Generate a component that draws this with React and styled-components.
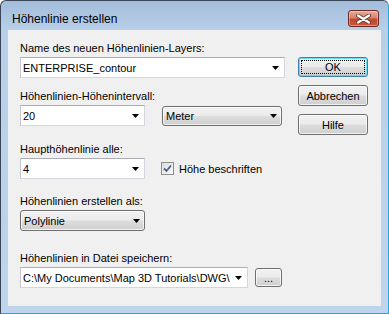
import React from "react";
import styled, { createGlobalStyle } from "styled-components";

const GlobalStyle = createGlobalStyle`
  html, body {
    margin: 0;
    padding: 0;
    background: #ffffff;
  }
  body {
    font-family: "Liberation Sans", Arial, sans-serif;
    font-size: 11px;
    color: #000;
  }
`;

const Window = styled.div`
  box-sizing: border-box;
  width: 389px;
  height: 314px;
  display: flex;
  flex-direction: column;
  border: 1px solid #3a4656;
  border-right-color: #2aa6d6;
  border-bottom-color: #2aa6d6;
  border-radius: 6px 6px 0 0;
  background: linear-gradient(#a2bcdb, #b8cfe9 28px, #bfd5ed);
  padding: 0 7px 7px 7px;
`;

const TitleBar = styled.div`
  height: 29px;
  display: flex;
  align-items: flex-start;
  justify-content: space-between;
  padding-left: 4px;
`;

const Title = styled.span`
  font-size: 12px;
  color: #000;
  padding-top: 11px;
`;

const CloseButton = styled.div`
  box-sizing: border-box;
  width: 31px;
  height: 17px;
  margin-right: 2px;
  margin-top: 9px;
  border: 1px solid #6d2a22;
  border-radius: 3px;
  background: linear-gradient(#e6ab9d, #d38570 45%, #c1482f 55%, #c8543a);
  display: flex;
  align-items: center;
  justify-content: center;
  box-shadow: inset 0 0 0 1px rgba(255, 220, 210, 0.45);
`;

const Client = styled.div`
  flex: 1;
  background: #f0f0f0;
  display: flex;
  padding: 0 14px 0 12px;
`;

const Form = styled.div`
  width: 265px;
  display: flex;
  flex-direction: column;
`;

const Group = styled.div`
  margin-top: ${(p) => p.$mt}px;
  display: flex;
  flex-direction: column;
`;

const Label = styled.div`
  height: 13px;
  line-height: 13px;
  margin-bottom: 2px;
  white-space: nowrap;
`;

const Row = styled.div`
  display: flex;
  align-items: center;
`;

const Combo = styled.div`
  box-sizing: border-box;
  width: ${(p) => p.$w}px;
  height: 21px;
  background: #fff;
  border: 1px solid #d3d6dc;
  border-top-color: #abadb3;
  border-left-color: #c6c8ce;
  display: flex;
  align-items: center;
  padding: 0 5px 0 2px;
`;

const ComboText = styled.span`
  flex: 1;
  overflow: hidden;
  white-space: nowrap;
  margin-right: 3px;
`;

const DropButton = styled.div`
  box-sizing: border-box;
  width: ${(p) => p.$w}px;
  height: ${(p) => p.$h || 21}px;
  margin-left: ${(p) => p.$ml || 0}px;
  border: 1px solid #707070;
  border-radius: 3px;
  background: linear-gradient(#f2f2f2, #ebebeb 48%, #dddddd 52%, #cfcfcf);
  box-shadow: inset 0 0 0 1px rgba(255, 255, 255, 0.7);
  display: flex;
  align-items: center;
  padding: 0 4px 0 3px;
`;

const Check = styled.label`
  display: flex;
  align-items: center;
  margin-left: 16px;
  gap: 5px;
`;

const CheckBox = styled.span`
  box-sizing: border-box;
  width: 13px;
  height: 13px;
  border: 1px solid #8f8f8f;
  background: linear-gradient(135deg, #dcdcdc, #fbfbfb);
  display: flex;
  align-items: center;
  justify-content: center;
`;

const ButtonCol = styled.div`
  margin-left: 13px;
  padding-top: 27px;
  display: flex;
  flex-direction: column;
  gap: 8px;
`;

const Button = styled.div`
  box-sizing: border-box;
  width: ${(p) => p.$w || 70}px;
  height: ${(p) => p.$h || 21}px;
  margin-left: ${(p) => p.$ml || 0}px;
  border: 1px solid ${(p) => (p.$default ? "#3c7fb1" : "#707070")};
  border-radius: 3px;
  background: linear-gradient(#f2f2f2, #ebebeb 48%, #dddddd 52%, #cfcfcf);
  box-shadow: inset 0 0 0 1px
    ${(p) => (p.$default ? "rgba(72, 216, 251, 0.8)" : "rgba(255, 255, 255, 0.7)")};
  display: flex;
  align-items: center;
  justify-content: center;
  padding: 2px;
`;

const Focus = styled.div`
  box-sizing: border-box;
  width: 100%;
  height: 100%;
  border: 1px dotted #000;
  display: flex;
  align-items: center;
  justify-content: center;
`;

const Arrow = () => (
  <svg width="7" height="4" viewBox="0 0 7 4">
    <polygon points="0,0 7,0 3.5,4" fill="#000" />
  </svg>
);

const CloseX = () => (
  <svg width="15" height="10" viewBox="0 0 15 10">
    <path d="M2 1.5 L13 8.5 M13 1.5 L2 8.5" stroke="#6a3a33" strokeWidth="4" strokeLinecap="round" />
    <path d="M2 1.5 L13 8.5 M13 1.5 L2 8.5" stroke="#ffffff" strokeWidth="2.2" strokeLinecap="round" />
  </svg>
);

const Tick = () => (
  <svg width="9" height="9" viewBox="0 0 9 9">
    <path d="M1 4.5 L3.5 7 L8 1.5" stroke="#4c5f8f" strokeWidth="1.8" fill="none" />
  </svg>
);

export default function App() {
  return (
    <>
      <GlobalStyle />
      <Window>
        <TitleBar>
          <Title>Höhenlinie erstellen</Title>
          <CloseButton>
            <CloseX />
          </CloseButton>
        </TitleBar>
        <Client>
          <Form>
            <Group $mt={12}>
              <Label>Name des neuen Höhenlinien-Layers:</Label>
              <Combo $w={265}>
                <ComboText>ENTERPRISE_contour</ComboText>
                <Arrow />
              </Combo>
            </Group>
            <Group $mt={12}>
              <Label>Höhenlinien-Höhenintervall:</Label>
              <Row>
                <Combo $w={125}>
                  <ComboText>20</ComboText>
                  <Arrow />
                </Combo>
                <DropButton $w={120} $h={20} $ml={17}>
                  <ComboText>Meter</ComboText>
                  <Arrow />
                </DropButton>
              </Row>
            </Group>
            <Group $mt={17}>
              <Label>Haupthöhenlinie alle:</Label>
              <Row>
                <Combo $w={125}>
                  <ComboText>4</ComboText>
                  <Arrow />
                </Combo>
                <Check>
                  <CheckBox>
                    <Tick />
                  </CheckBox>
                  Höhe beschriften
                </Check>
              </Row>
            </Group>
            <Group $mt={16}>
              <Label>Höhenlinien erstellen als:</Label>
              <DropButton $w={125}>
                <ComboText>Polylinie</ComboText>
                <Arrow />
              </DropButton>
            </Group>
            <Group $mt={21}>
              <Label>Höhenlinien in Datei speichern:</Label>
              <Row>
                <Combo $w={228}>
                  <ComboText>C:\My Documents\Map 3D Tutorials\DWG\</ComboText>
                  <Arrow />
                </Combo>
                <Button $w={27} $h={19} $ml={7}>...</Button>
              </Row>
            </Group>
          </Form>
          <ButtonCol>
            <Button $default $h={20}>
              <Focus>OK</Focus>
            </Button>
            <Button>Abbrechen</Button>
            <Button>Hilfe</Button>
          </ButtonCol>
        </Client>
      </Window>
    </>
  );
}
